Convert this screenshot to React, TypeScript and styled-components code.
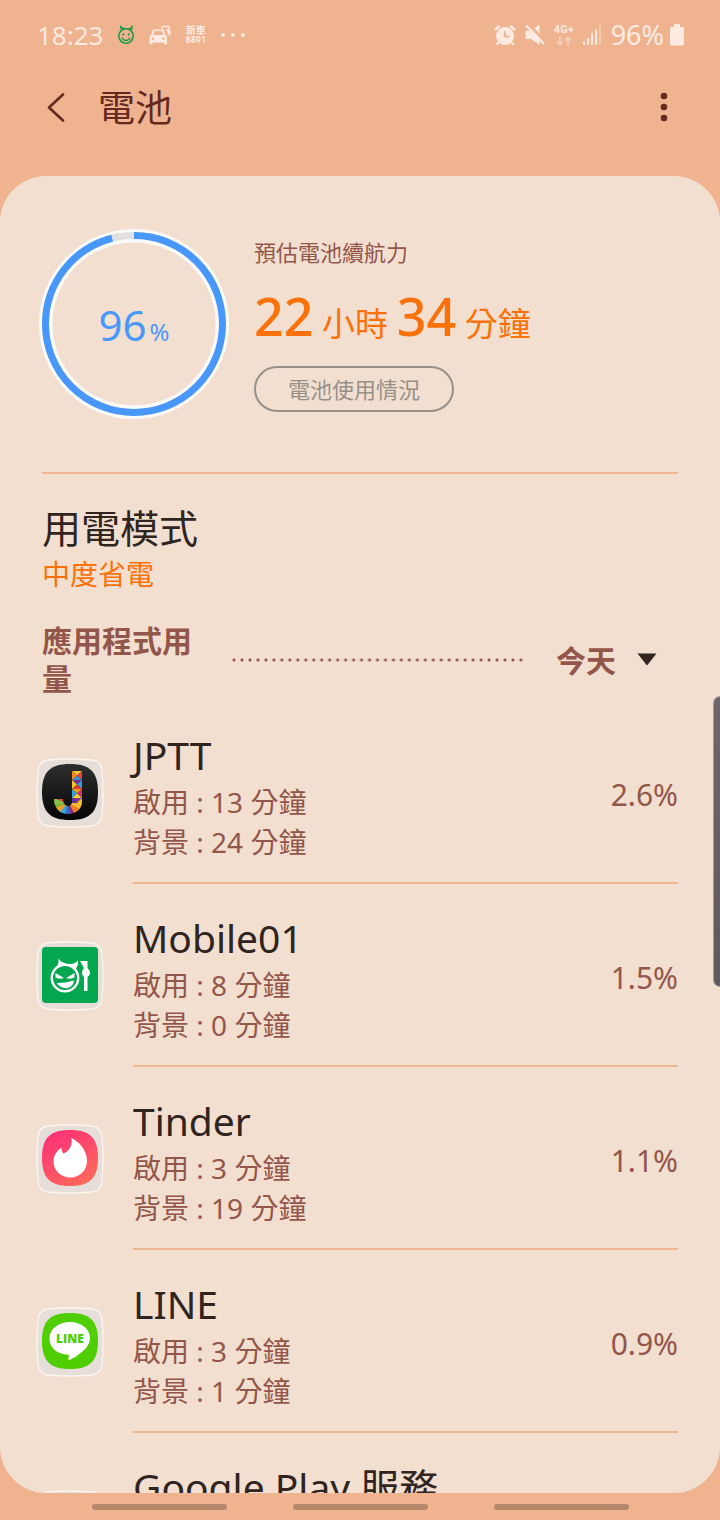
import React from 'react';
import styled, { createGlobalStyle } from 'styled-components';

const colors = {
  page: '#efb390',
  card: '#f2dfd0',
  line: '#edb792',
  title: '#65291f',
  brown: '#93564a',
  ink: '#30241f',
  orange: '#f97108',
  blue: '#4897fa',
  status: '#fdebe2',
};

const GlobalStyle = createGlobalStyle`
  *, *::before, *::after { box-sizing: border-box; }
  body {
    margin: 0;
    background: ${colors.page};
    font-family: "Noto Sans", "Noto Sans CJK TC", sans-serif;
    color: ${colors.ink};
  }
  h1, h2, h3, p, ul { margin: 0; padding: 0; font-weight: 400; }
  button, select { font: inherit; color: inherit; background: none; border: 0; padding: 0; cursor: pointer; }
`;

const Screen = styled.div`
  position: relative;
  display: flex;
  flex-direction: column;
  height: 100vh;
  overflow: hidden;
`;

const StatusBar = styled.header`
  display: flex;
  align-items: center;
  justify-content: space-between;
  height: 69px;
  padding: 0 36px 0 37px;
  color: ${colors.status};
  font-size: 26px;
  line-height: 36px;
`;

const StatusGroup = styled.div<{ $gap: number }>`
  display: flex;
  align-items: center;
  gap: ${(p) => p.$gap}px;
`;

const NewCarBadge = styled.div`
  display: flex;
  flex-direction: column;
  align-items: center;
  font-weight: 700;
`;

const BadgeName = styled.span`
  font-size: 10px;
  line-height: 11px;
`;

const BadgeNumber = styled.span`
  font-family: Roboto, sans-serif;
  font-size: 9px;
  line-height: 9px;
`;

const AppBar = styled.div`
  display: flex;
  align-items: center;
  height: 107px;
  padding: 0 36px 32px;
  color: ${colors.title};
`;

const IconButton = styled.button`
  display: flex;
  align-items: center;
  justify-content: center;
  width: 40px;
  height: 48px;
`;

const Title = styled.h1`
  flex: 1;
  padding: 3px 0 0 22px;
  font-size: 37px;
  line-height: 48px;
`;

const Card = styled.main`
  flex: 1;
  min-height: 0;
  overflow-y: auto;
  scrollbar-width: none;
  border-radius: 46px;
  background: ${colors.card};
`;

const Summary = styled.section`
  display: flex;
  align-items: flex-start;
  gap: 24px;
  margin: 0 42px;
  padding: 52px 0;
  border-bottom: 2px solid ${colors.line};
`;

const Gauge = styled.div`
  position: relative;
  display: flex;
  align-items: center;
  justify-content: center;
  width: 192px;
  height: 192px;
  margin-left: -4px;
  color: ${colors.blue};
`;

const GaugeRing = styled.svg`
  position: absolute;
  inset: 0;
`;

const GaugeValue = styled.p`
  font-size: 42px;
  line-height: 56px;
  padding-top: 8px;
`;

const GaugeUnit = styled.span`
  padding-left: 3px;
  font-size: 24px;
`;

const Estimate = styled.div`
  display: flex;
  flex-direction: column;
  align-items: flex-start;
  padding-top: 8px;
`;

const EstimateLabel = styled.h2`
  color: ${colors.brown};
  font-size: 22px;
  line-height: 32px;
`;

const EstimateTime = styled.p`
  margin: 12px 0 6px;
  color: ${colors.orange};
  font-size: 33px;
  line-height: 72px;
  white-space: nowrap;
`;

const BigNumber = styled.span`
  font-size: 52px;
  font-weight: 500;
`;

const UsageButton = styled.button`
  width: 200px;
  height: 46px;
  border: 2px solid #97908a;
  border-radius: 23px;
  color: #97908a;
  font-size: 22px;
  line-height: 32px;
`;

const PowerMode = styled.section`
  padding: 28px 42px 0;
`;

const ModeTitle = styled.h2`
  font-size: 39px;
  line-height: 52px;
`;

const ModeValue = styled.p`
  color: ${colors.orange};
  font-size: 28px;
  line-height: 40px;
`;

const UsageHeader = styled.div`
  display: flex;
  align-items: center;
  margin: 28px 42px 3px;
  color: ${colors.brown};
  font-size: 30px;
  font-weight: 700;
`;

const UsageTitle = styled.h2`
  width: 160px;
  font-size: 30px;
  font-weight: 700;
  line-height: 38px;
`;

const Dots = styled.div`
  flex: 1;
  height: 4px;
  margin: 0 31px 0 28px;
  background: radial-gradient(circle, ${colors.brown} 1px, transparent 2px) center / 8px 4px round;
`;

const PeriodPicker = styled.label`
  position: relative;
  display: flex;
  align-items: center;
`;

const PeriodSelect = styled.select`
  appearance: none;
  width: 122px;
  height: 48px;
  outline-offset: 2px;
`;

const PeriodArrow = styled.svg`
  position: absolute;
  right: 21px;
  top: 17px;
  pointer-events: none;
`;

const AppList = styled.ul`
  padding: 0 42px 0 36px;
  list-style: none;
`;

const AppRow = styled.li`
  display: flex;
  align-items: center;
  gap: 29px;
  min-height: 183px;
`;

const AppBody = styled.div`
  flex: 1;
  display: flex;
  align-items: flex-start;
  justify-content: space-between;
  align-self: stretch;
  padding: 27px 0 20px;
  border-bottom: 2px solid ${colors.line};
`;

const AppName = styled.h3`
  font-size: 39px;
  line-height: 54px;
`;

const AppDetail = styled.p`
  color: ${colors.brown};
  font-size: 28px;
  line-height: 40px;
`;

const AppShare = styled.p`
  align-self: center;
  color: ${colors.brown};
  font-size: 30px;
  line-height: 40px;
`;

const NavBar = styled.nav`
  display: flex;
  justify-content: center;
  gap: 66px;
  height: 27px;
`;

const NavPill = styled.button`
  width: 135px;
  display: flex;
  align-items: center;
  &::before {
    content: '';
    flex: 1;
    height: 6px;
    border-radius: 3px;
    background: #b7876b;
  }
`;

const EdgeHandle = styled.div`
  position: absolute;
  right: 0;
  top: 696px;
  width: 7px;
  height: 291px;
  border: 1px solid #a39b98;
  border-right: 0;
  border-radius: 8px 0 0 8px;
  background: linear-gradient(#6d666c, #5f5960);
`;

const SQUIRCLE = 'M34 6C54 6 62 14 62 34S54 62 34 62S6 54 6 34S14 6 34 6Z';

const Plate = ({ children }: { children?: React.ReactNode }) => (
  <svg width="68" height="70" viewBox="0 0 68 70" aria-hidden="true">
    <path
      d="M12 2Q34 0 56 2Q65 3 66 13Q68 35 66 57Q65 67 56 68Q34 70 12 68Q3 67 2 57Q0 35 2 13Q3 3 12 2Z"
      fill="#e5ded9"
      stroke="#fcf6f1"
      strokeWidth="1.3"
    />
    {children}
  </svg>
);

const cellColors = [
  ['#f4c430', '#e8452c', '#3a8fd0', '#f08a24'],
  ['#7a2d90', '#2f9fd8', '#e6352f', '#f6c52c'],
  ['#f3a021', '#d92c6a', '#f7d032', '#35a5dc'],
  ['#8a2f96', '#f5c22b', '#e23c2e', '#5b3b9b'],
];

const JpttIcon = () => (
  <Plate>
    <defs>
      <linearGradient id="jptt-bg" x1="0" y1="0" x2="0" y2="1">
        <stop offset="0" stopColor="#2e2e2e" />
        <stop offset="1" stopColor="#050505" />
      </linearGradient>
      <clipPath id="jptt-j">
        <path d="M36 13H46V43C46 51 40 56 32 56C24 56 18 50 18 41H27C27 45 29 48 32 48C35 48 36 46 36 42Z" />
      </clipPath>
    </defs>
    <path d={SQUIRCLE} fill="url(#jptt-bg)" />
    <g clipPath="url(#jptt-j)">
      {cellColors.map(([a, b, c, d], i) => {
        const y = 13 + i * 9;
        return (
          <g key={y}>
            <path d={`M36 ${y}h10l-5 4.5z`} fill={a} />
            <path d={`M46 ${y}v9l-5 -4.5z`} fill={b} />
            <path d={`M36 ${y + 9}h10l-5 -4.5z`} fill={c} />
            <path d={`M36 ${y}v9l5 -4.5z`} fill={d} />
          </g>
        );
      })}
      <path d="M32 45L48 45V54z" fill="#f6b92a" />
      <path d="M32 45L48 54L41 60z" fill="#f07c28" />
      <path d="M32 45L41 60L33 60z" fill="#8a2f96" />
      <path d="M32 45L34 60L27 60z" fill="#3b6fc9" />
      <path d="M32 45L28 60L20 56z" fill="#35a5dc" />
      <path d="M32 45L21 57L16 50z" fill="#f3a021" />
      <path d="M32 45L16 51L16 45z" fill="#7cb842" />
      <path d="M32 45L16 46L18 40z" fill="#8bc34a" />
      <path d="M18 40H28L30 45z" fill="#d9453a" />
    </g>
  </Plate>
);

const Mobile01Icon = () => (
  <Plate>
    <rect x="6" y="6" width="56" height="56" rx="4" fill="#04a64f" />
    <circle cx="29" cy="37" r="13.2" fill="none" stroke="#fff" strokeWidth="2.4" />
    <path d="M20.500 25.500Q23.500 22 22 17.500Q25 21.500 30 22.500L29 25Q25 24.500 21.500 27ZM33 23Q38.500 23.500 42 19.500Q42.500 24.500 39.500 28.500L36.500 26Z" fill="#fff" />
    <path d="M19.500 32L28 37Q23 38.500 19.500 36.500ZM38.500 32L30 37Q35 38.500 38.500 36.500Z" fill="#fff" />
    <path d="M20.500 42Q30 42 38 39.500Q37 46.500 30 47.200Q24 47 20.500 42Z" fill="#fff" />
    <path d="M44 20H51.500V27Q54 29.500 54 32Q54 34.500 51.500 36V50H48V36Q46 34.500 46 32Q46 29 48 27Z" fill="#fff" />
  </Plate>
);

const TinderIcon = () => (
  <Plate>
    <defs>
      <linearGradient id="tinder-bg" x1="0.2" y1="0" x2="0.8" y2="1">
        <stop offset="0" stopColor="#fd3078" />
        <stop offset="1" stopColor="#ff6b58" />
      </linearGradient>
    </defs>
    <path d={SQUIRCLE} fill="url(#tinder-bg)" />
    <path
      d="M35.500 14C42 17 51 25.500 51 37C51 46.500 43.500 53.500 34.500 53.500C25 53.500 17.500 46.500 17.500 37.500C17.500 31 21 27 25.500 23.500C25.500 26 26 28 27.500 29.500C34.500 27 36.500 20 35.500 14Z"
      fill="#fff"
    />
  </Plate>
);

const LineText = styled.text`
  font-family: "Open Sans", "Noto Sans", sans-serif;
  font-size: 12px;
  font-weight: 800;
`;

const LineIcon = () => (
  <Plate>
    <path d={SQUIRCLE} fill="#4fce03" />
    <path
      d="M34 15C45.500 15 54 22 54 31C54 36 51 40.500 47 44C42 48.500 37 51.500 33.500 53Q32 53.500 32.500 51.500L33 48Q13.500 46 13.500 31C13.500 22 22.500 15 34 15Z"
      fill="#fff"
    />
    <LineText x="34" y="36" textAnchor="middle" fill="#4fce03">LINE</LineText>
  </Plate>
);

type AppUsage = {
  name: string;
  icon: React.ReactNode;
  active?: number;
  background?: number;
  share?: string;
};

const apps: AppUsage[] = [
  { name: 'JPTT', icon: <JpttIcon />, active: 13, background: 24, share: '2.6%' },
  { name: 'Mobile01', icon: <Mobile01Icon />, active: 8, background: 0, share: '1.5%' },
  { name: 'Tinder', icon: <TinderIcon />, active: 3, background: 19, share: '1.1%' },
  { name: 'LINE', icon: <LineIcon />, active: 3, background: 1, share: '0.9%' },
  { name: 'Google Play 服務', icon: <Plate /> },
];

const DevilIcon = () => (
  <svg width="18" height="20" viewBox="0 0 18 20" fill="none" stroke="#1f9a4a" aria-hidden="true">
    <circle cx="9" cy="11" r="7.2" strokeWidth="1.6" />
    <path d="M5 4.500Q3.500 3.500 3.800 1.500Q5.500 3.500 8 3.700M11 4Q14 3.700 15 1.500Q15.500 4 13.500 5.500" strokeWidth="1.3" />
    <path d="M5 12.500Q6 15.500 9 15.500T13 12.500" strokeWidth="1.3" />
    <circle cx="6.300" cy="9.500" r="0.700" fill="#1f9a4a" />
    <circle cx="11.700" cy="9.500" r="0.700" fill="#1f9a4a" />
  </svg>
);

const CarIcon = () => (
  <svg width="22" height="20" viewBox="0 0 22 20" fill="currentColor" aria-hidden="true">
    <path
      fillRule="evenodd"
      d="M4 4.500H14.500L16.500 10L18 12V18.500Q18 19.500 17 19.500H15.500Q15 19.500 15 18.500V17.500H3.500V18.500Q3.500 19.500 3 19.500H1.500Q0.500 19.500 0.500 18.500V12L2 10ZM5.500 6L4 10H14.500L13 6ZM4 12.200a1.400 1.400 0 1 0 .01 0ZM14.500 12.200a1.400 1.400 0 1 0 .01 0Z"
    />
    <path d="M12.500 3.500L13.500 1.500H20L21 6.500V9.500H19" fill="none" stroke="currentColor" strokeWidth="1.300" />
    <path d="M17 4H20.500L21 8H18.500Z" />
  </svg>
);

const MoreDots = () => (
  <svg width="26" height="6" viewBox="0 0 26 6" fill="currentColor" aria-hidden="true">
    <circle cx="3" cy="3" r="1.900" />
    <circle cx="13" cy="3" r="1.900" />
    <circle cx="23" cy="3" r="1.900" />
  </svg>
);

const AlarmIcon = () => (
  <svg width="22" height="22" viewBox="0 0 22 22" aria-hidden="true">
    <path d="M1 6L5.500 2M21 6L16.500 2M5 18L2.500 20.500M17 18L19.500 20.500" stroke="currentColor" strokeWidth="2.400" />
    <circle cx="11" cy="12" r="9" fill="currentColor" />
    <path d="M11 7V12.500H15.500" fill="none" stroke={colors.page} strokeWidth="1.800" />
  </svg>
);

const MuteIcon = () => (
  <svg width="20" height="22" viewBox="0 0 20 22" aria-hidden="true">
    <path d="M0.500 7H5.500L14.500 0.500V21L6 15H0.500Z" fill="currentColor" />
    <path d="M3 0L20 17" stroke={colors.page} strokeWidth="3" />
    <path d="M1 1.500L19 20" stroke="currentColor" strokeWidth="2.400" />
  </svg>
);

const NetworkLabel = styled.div`
  display: flex;
  flex-direction: column;
  align-items: center;
  font-family: Roboto, sans-serif;
  font-size: 11px;
  font-weight: 700;
  line-height: 12px;
`;

const TrafficIcon = () => (
  <svg width="16" height="10" viewBox="0 0 16 10" fill="none" stroke="currentColor" strokeWidth="2" opacity="0.45" aria-hidden="true">
    <path d="M4 0.500V8.500M1 5.500L4 8.500L7 5.500M12 9.500V1.500M9 4.500L12 1.500L15 4.500" />
  </svg>
);

const SignalIcon = () => (
  <svg width="19" height="20" viewBox="0 0 19 20" fill="currentColor" aria-hidden="true">
    <rect x="0" y="16" width="2" height="4" rx="1" />
    <rect x="4" y="13" width="2" height="7" rx="1" />
    <rect x="8" y="8" width="2" height="12" rx="1" />
    <rect x="12" y="4" width="2" height="16" rx="1" />
    <rect x="16" y="0" width="2" height="20" rx="1" opacity="0.4" />
  </svg>
);

const BatteryIcon = () => (
  <svg width="14" height="22" viewBox="0 0 14 22" fill="currentColor" aria-hidden="true">
    <path d="M4.500 0H9.500Q10 0 10 .5V3H13Q14 3 14 4V20.500Q14 21.500 13 21.500H1Q0 21.500 0 20.500V4Q0 3 1 3H4V.5Q4 0 4.500 0Z" />
  </svg>
);

const BatteryPercent = styled.span`
  margin-right: -3px;
  font-size: 27px;
`;

const BATTERY_LEVEL = 96;

const App = () => (
  <>
    <GlobalStyle />
    <Screen>
      <StatusBar>
        <StatusGroup $gap={14}>
          <span>18:23</span>
          <DevilIcon />
          <CarIcon />
          <NewCarBadge>
            <BadgeName>新車</BadgeName>
            <BadgeNumber>8891</BadgeNumber>
          </NewCarBadge>
          <MoreDots />
        </StatusGroup>
        <StatusGroup $gap={9}>
          <AlarmIcon />
          <MuteIcon />
          <NetworkLabel>
            4G+
            <TrafficIcon />
          </NetworkLabel>
          <SignalIcon />
          <BatteryPercent>{BATTERY_LEVEL}%</BatteryPercent>
          <BatteryIcon />
        </StatusGroup>
      </StatusBar>

      <AppBar>
        <IconButton aria-label="返回">
          <svg width="20" height="30" viewBox="0 0 20 30" fill="none" stroke="currentColor" strokeWidth="2.600" strokeLinecap="round" strokeLinejoin="round" aria-hidden="true">
            <path d="M17 2.500L3 15.500L17 28.500" />
          </svg>
        </IconButton>
        <Title>電池</Title>
        <IconButton aria-label="更多選項">
          <svg width="8" height="30" viewBox="0 0 8 30" fill="currentColor" aria-hidden="true">
            <circle cx="4" cy="4" r="3.300" />
            <circle cx="4" cy="15" r="3.300" />
            <circle cx="4" cy="26" r="3.300" />
          </svg>
        </IconButton>
      </AppBar>

      <Card>
        <Summary>
          <Gauge>
            <GaugeRing viewBox="0 0 192 192" fill="none" aria-hidden="true">
              <circle cx="96" cy="96" r="88.300" stroke="#fafaf8" strokeWidth="13.500" />
              <circle cx="96" cy="96" r="88.500" stroke="#e0e0e0" strokeWidth="7" />
              <circle
                cx="96"
                cy="96"
                r="88.500"
                stroke={colors.blue}
                strokeWidth="7"
                pathLength="100"
                strokeDasharray={`${BATTERY_LEVEL} 100`}
                transform="rotate(-90 96 96)"
              />
            </GaugeRing>
            <GaugeValue>
              {BATTERY_LEVEL}
              <GaugeUnit>%</GaugeUnit>
            </GaugeValue>
          </Gauge>
          <Estimate>
            <EstimateLabel>預估電池續航力</EstimateLabel>
            <EstimateTime>
              <BigNumber>22</BigNumber> 小時 <BigNumber>34</BigNumber> 分鐘
            </EstimateTime>
            <UsageButton>電池使用情況</UsageButton>
          </Estimate>
        </Summary>

        <PowerMode>
          <ModeTitle>用電模式</ModeTitle>
          <ModeValue>中度省電</ModeValue>
        </PowerMode>

        <UsageHeader>
          <UsageTitle>應用程式用量</UsageTitle>
          <Dots />
          <PeriodPicker>
            <PeriodSelect aria-label="期間">
              <option>今天</option>
            </PeriodSelect>
            <PeriodArrow width="20" height="13" viewBox="0 0 20 13" fill={colors.ink} aria-hidden="true">
              <path d="M0.500 0.500H19.500L10 12.500Z" />
            </PeriodArrow>
          </PeriodPicker>
        </UsageHeader>

        <AppList>
          {apps.map((app) => (
            <AppRow key={app.name}>
              {app.icon}
              <AppBody>
                <div>
                  <AppName>{app.name}</AppName>
                  {app.active !== undefined && <AppDetail>啟用 : {app.active} 分鐘</AppDetail>}
                  {app.background !== undefined && <AppDetail>背景 : {app.background} 分鐘</AppDetail>}
                </div>
                {app.share && <AppShare>{app.share}</AppShare>}
              </AppBody>
            </AppRow>
          ))}
        </AppList>
      </Card>

      <NavBar>
        <NavPill aria-label="最近使用" />
        <NavPill aria-label="首頁" />
        <NavPill aria-label="返回上一頁" />
      </NavBar>
      <EdgeHandle />
    </Screen>
  </>
);

export default App;
